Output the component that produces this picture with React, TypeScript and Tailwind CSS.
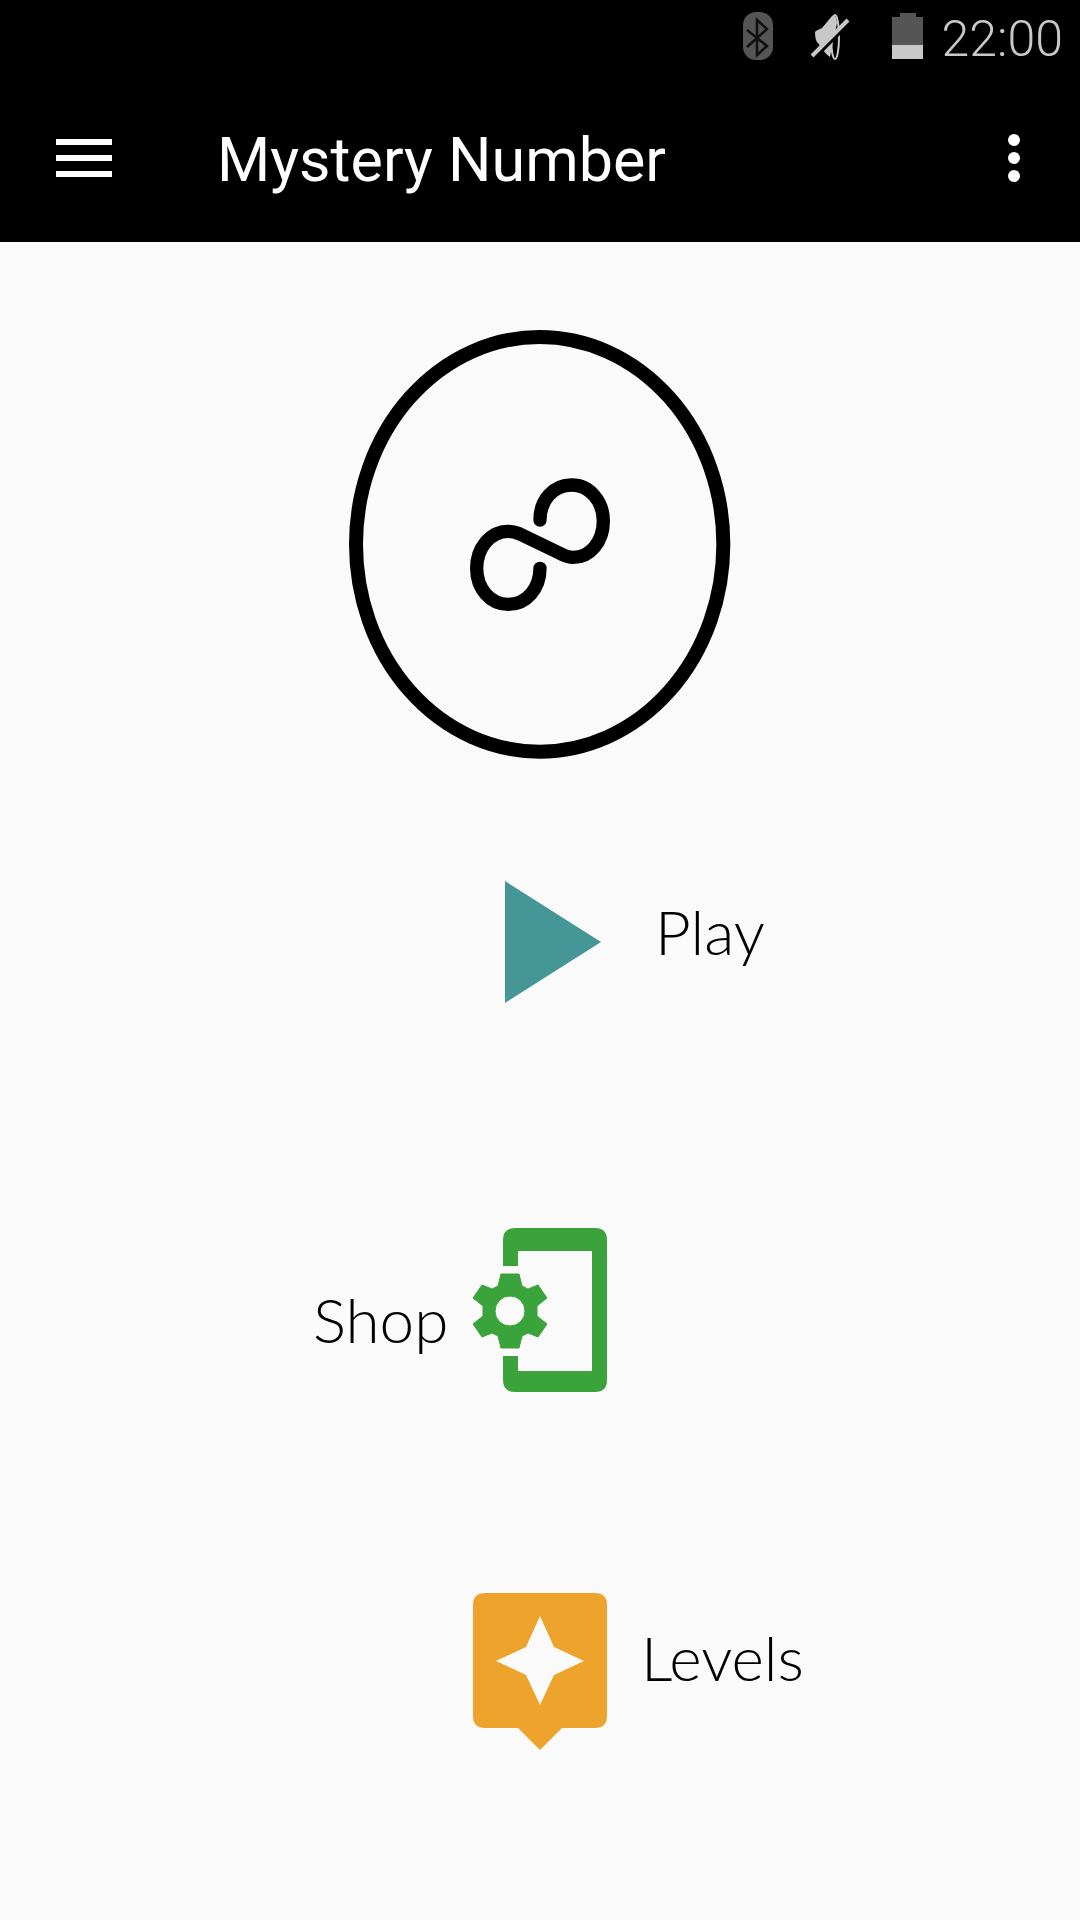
const sans = "font-['Lato','Open_Sans','Liberation_Sans',sans-serif]";

function StatusIcons() {
  return (
    <svg width="190" height="60" viewBox="0 0 190 60" className="block">
      <rect x="3" y="7" width="30" height="48" rx="13" fill="#555" />
      <path d="M7 25 L27 41 L17 50 V15 L27 24 L7 42" fill="none" stroke="#111" strokeWidth="2.6" />
      <path d="M75 27 Q75 26 82 23 L92 11 Q96 8 97 18 L90 52 Q86 50 78 38 Q75 36 75 27 Z" fill="#c8c8c8" />
      <ellipse cx="95" cy="32" rx="4" ry="22" fill="none" stroke="#c8c8c8" strokeWidth="2" />
      <path d="M74 53 L110 17" stroke="#000" strokeWidth="4" />
      <path d="M72 51 L108 15" stroke="#c8c8c8" strokeWidth="4" />
      <path d="M160 8 H176 V12 H183 V54 H152 V12 H160Z" fill="#555" />
      <rect x="152" y="40" width="31" height="14" fill="#c8c8c8" />
    </svg>
  );
}

function Logo() {
  return (
    <svg width="400" height="450" viewBox="0 0 1200 1350" className="block">
      <ellipse cx="599" cy="673" rx="551" ry="622" fill="none" stroke="#000" strokeWidth="42" />
      <path
        d="M600 600 C600 540 640 495 695 495 C750 495 790 545 790 603 C790 665 750 712 700 712 C685 712 675 708 660 700 L540 642 C525 636 515 634 505 634 C450 634 410 685 410 745 C410 805 450 853 505 853 C560 853 600 805 600 745"
        fill="none"
        stroke="#000"
        strokeWidth="40"
        strokeLinecap="round"
      />
    </svg>
  );
}

function ShopIcon() {
  return (
    <svg width="135" height="164" viewBox="0 0 135 164" className="block">
      <path
        fillRule="evenodd"
        fill="#3aa33c"
        d="M31 38 V12 Q31 0 43 0 H123 Q135 0 135 12 V152 Q135 164 123 164 H43 Q31 164 31 152 V128 H46 V143 H120 V23 H46 V38 Z"
      />
      <g transform="translate(38 83)">
        <path
          fillRule="evenodd"
          fill="#3aa33c"
          stroke="#3aa33c"
          strokeWidth="1"
          strokeLinejoin="round"
          d="M-9 -37 H9 L12 -25 L18 -22 L28 -26 L37 -13 L27 -5 V5 L37 13 L28 26 L18 22 L12 25 L9 37 H-9 L-12 25 L-18 22 L-28 26 L-37 13 L-27 5 V-5 L-37 -13 L-28 -26 L-18 -22 L-12 -25 Z M15 0 A15 15 0 1 0 -15 0 A15 15 0 1 0 15 0 Z"
        />
      </g>
    </svg>
  );
}

function LevelsIcon() {
  return (
    <svg width="134" height="157" viewBox="0 0 134 157" className="block">
      <path
        fill="#eea32d"
        d="M12 0 H122 Q134 0 134 12 V123 Q134 135 122 135 H89 L67 157 L45 135 H12 Q0 135 0 123 V12 Q0 0 12 0 Z"
      />
      <path fill="#fafafa" d="M67 23 L81 54 L111 68 L81 82 L67 112 L53 82 L23 68 L53 54 Z" />
    </svg>
  );
}

export default function App() {
  return (
    <div className={`flex h-[1920px] w-[1080px] flex-col overflow-hidden bg-[#fafafa] ${sans}`}>
      <header className="h-[242px] shrink-0 bg-black text-white">
        <div className="flex h-[116px] items-start justify-end pr-[17px] pt-[5px]">
          <StatusIcons />
          <span className="ml-[12px] mt-[5px] font-['Roboto',sans-serif] text-[50px] font-light leading-[58px] text-[#c8c8c8]">
            22:00
          </span>
        </div>
        <div className="flex h-[84px] items-center pl-[56px] pr-[60px]">
          <div className="flex w-[56px] flex-col gap-[10px]">
            <div className="h-[6px] bg-white" />
            <div className="h-[6px] bg-white" />
            <div className="h-[6px] bg-white" />
          </div>
          <h1 className="ml-[105px] mt-[4px] font-['Roboto',sans-serif] text-[61px] font-normal leading-[84px]">
            Mystery Number
          </h1>
          <div className="ml-auto flex flex-col gap-[6px]">
            <div className="size-[12px] rounded-full bg-white" />
            <div className="size-[12px] rounded-full bg-white" />
            <div className="size-[12px] rounded-full bg-white" />
          </div>
        </div>
      </header>

      <main className="flex flex-col font-light text-black">
        <div className="ml-[340px] mt-[78px]">
          <Logo />
        </div>

        <div className="ml-[505px] mt-[111px] flex h-[122px] items-center">
          <svg width="96" height="122" viewBox="0 0 96 122" className="block shrink-0">
            <path d="M0 0 L96 61 L0 122 Z" fill="#459797" />
          </svg>
          <span className="ml-[54px] mt-[-22px] text-[62px] leading-[84px]">Play</span>
        </div>

        <div className="ml-[313px] mt-[225px] flex h-[164px] items-center">
          <span className="mt-[18px] w-[159px] text-[62px] leading-[84px]">Shop</span>
          <div className="shrink-0">
            <ShopIcon />
          </div>
        </div>

        <div className="ml-[473px] mt-[201px] flex h-[157px] items-start">
          <LevelsIcon />
          <span className="ml-[34px] mt-[22px] text-[62px] leading-[84px]">Levels</span>
        </div>
      </main>
    </div>
  );
}
